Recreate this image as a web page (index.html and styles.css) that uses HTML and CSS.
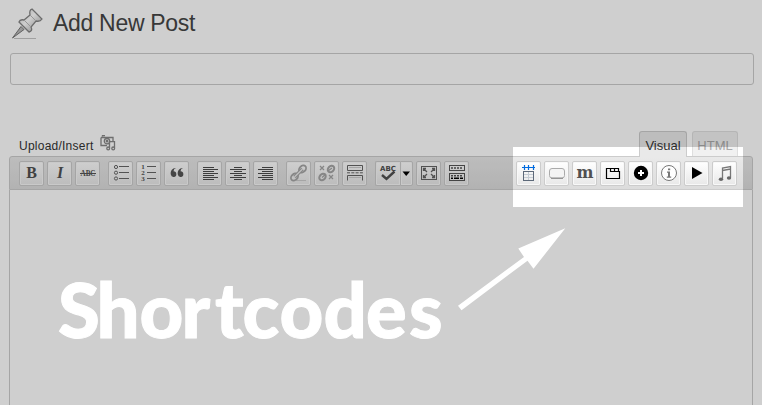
FILE: index.html
```html
<!DOCTYPE html>
<html lang="en">
<head>
<meta charset="utf-8">
<title>Add New Post</title>
<link rel="stylesheet" href="styles.css">
</head>
<body>
<header class="heading">
  <svg class="pin" width="32" height="32" viewBox="0 0 32 32">
    <defs><linearGradient id="metal" x1="0" y1="0" x2="1" y2="1"><stop offset="0" stop-color="#ccc"/><stop offset=".45" stop-color="#fff"/><stop offset="1" stop-color="#999"/></linearGradient></defs>
    <path d="M3 30.500H25" stroke="#999" opacity=".55"/>
    <path d="M1.500 30L10 18.500L13 21.500Z" fill="#bbb" stroke="#777"/>
    <path d="M8 14Q9 11 13 12L19 7Q18 2 21 1L31 11Q29 14 25 13L20 19Q22 23 18 24Z" fill="url(#metal)" stroke="#858585" stroke-width="1.300"/>
    <path d="M13 12L20 19M19 7L25 13" fill="none" stroke="#bbb"/>
  </svg>
  <h1>Add New Post</h1>
</header>
<input class="title" type="text" aria-label="Title">
<section class="editor">
  <div class="tools">
    <span class="upload">Upload/Insert</span>
    <svg class="media" width="16" height="16" viewBox="0 0 16 16" fill="none" stroke="#888" stroke-width="1.300">
      <path d="M2.500 1.500V.6H5M1 2.500H13V6M1 2.500V10.500H7"/><circle cx="7" cy="6.200" r="2.700"/><circle cx="7" cy="6.200" r=".7"/><path d="M9.500 13V6.600H14.500V13"/><circle cx="8.200" cy="13.400" r="1.400"/><circle cx="13.200" cy="13.400" r="1.400"/>
    </svg>
    <nav class="tabs"><a class="tab active">Visual</a><a class="tab">HTML</a></nav>
  </div>
  <div class="toolbar">
    <div class="group">
      <button><svg viewBox="0 0 25 25"><text class="serif" x="12.500" y="17" font-size="16">B</text></svg></button>
      <button><svg viewBox="0 0 25 25"><text class="serif italic" x="13" y="17" font-size="16">I</text></svg></button>
      <button><svg viewBox="0 0 25 25"><text class="serif" x="13" y="15" font-size="8" textLength="15" lengthAdjust="spacingAndGlyphs">ABC</text><path d="M5 12.500H21" stroke="#555"/></svg></button>
    </div>
    <div class="group">
      <button><svg viewBox="0 0 25 25" fill="none" stroke="#666"><circle cx="8" cy="6" r="1.600"/><circle cx="8" cy="11.700" r="1.600"/><circle cx="8" cy="17.500" r="1.600"/><path d="M11 5.500H21M11 11.500H21M11 17.500H21"/></svg></button>
      <button><svg viewBox="0 0 25 25"><text class="digits"><tspan x="7" y="8">1</tspan><tspan x="7" y="14">2</tspan><tspan x="7" y="20">3</tspan></text><path d="M11 5.500H20M11 11.500H20M11 17.500H20" stroke="#666"/></svg></button>
      <button><svg viewBox="0 0 25 25" fill="#555"><path d="M12 7Q9.500 7.700 9.500 10.300A2.800 2.800 0 1 1 6.800 13.600C6.300 10 8 7 12 7ZM19 7Q16.500 7.700 16.500 10.300A2.800 2.800 0 1 1 13.800 13.600C13.300 10 15 7 19 7Z"/></svg></button>
    </div>
    <div class="group">
      <button><svg viewBox="0 0 25 25" stroke="#4c4c4c"><path d="M6 6.500h11M6 8.500h15M6 10.500h11M6 12.500h15M6 14.500h11M6 16.500h15M6 18.500h11"/></svg></button>
      <button><svg viewBox="0 0 25 25" stroke="#4c4c4c"><path d="M9 6.500h8M5 8.500h16M9 10.500h8M5 12.500h16M9 14.500h8M5 16.500h16M9 18.500h8"/></svg></button>
      <button><svg viewBox="0 0 25 25" stroke="#4c4c4c"><path d="M9 6.500h11M5 8.500h15M9 10.500h11M5 12.500h15M9 14.500h11M5 16.500h15M9 18.500h11"/></svg></button>
    </div>
    <div class="group">
      <button><svg viewBox="0 0 25 25" fill="none"><path d="M10 19.500H20" stroke="#ccc"/><g stroke="#a5a5a5" stroke-width="1.800"><ellipse cx="16.500" cy="8" rx="4" ry="3" transform="rotate(-45 16.500 8)"/><ellipse cx="8.500" cy="16" rx="4" ry="3" transform="rotate(-45 8.500 16)"/></g><path d="M8.500 16L16.500 8" stroke="#a5a5a5" stroke-width="3.500"/><path d="M8.500 16L16.500 8" stroke="#eee" stroke-width="1.300"/></svg></button>
      <button><svg viewBox="0 0 25 25" fill="none" stroke="#a5a5a5"><g stroke-width="2"><ellipse cx="17" cy="8" rx="3.600" ry="2.800" transform="rotate(-45 17 8)"/><ellipse cx="8.500" cy="16" rx="3.600" ry="2.800" transform="rotate(-45 8.500 16)"/></g><path d="M14 10L18 7M8 16.500L12 13M6 5l4 4M10 5l-4 4M15 14l4 4M19 14l-4 4" stroke-width="1.300"/></svg></button>
      <button><svg viewBox="0 0 25 25" fill="none" stroke="#666"><path d="M5.500 9.500V4.500H20.500V9.500ZM5.500 19.500V14.500H20.500V19.500"/><path d="M5 11.800H21" stroke-dasharray="3 1.300"/><path d="M7 6.500H19M7 16.500H19" stroke="#ccc"/></svg></button>
    </div>
    <div class="group last">
      <button class="spell"><svg viewBox="0 0 25 25"><text class="spelling" x="13" y="9.700">ABC</text><path d="M7 14L11.500 18L19.500 10.500" fill="none" stroke="#505050" stroke-width="2.400"/></svg></button>
      <button class="arrow"><svg viewBox="0 0 13 25"><path d="M2.500 10.500H10L6.200 15Z" fill="#000"/></svg></button>
      <button><svg viewBox="0 0 25 25" fill="none" stroke="#666"><rect x="5.500" y="5.500" width="15" height="13"/><path d="M7.500 10V7.500H10M7.500 7.500L11 11M16 7.500H18.500V10M18.500 7.500L15 11M7.500 14V16.500H10M7.500 16.500L11 13M18.500 14V16.500H16M18.500 16.500L15 13" stroke-width="1.300"/></svg></button>
      <button><svg viewBox="0 0 25 25" fill="none" stroke="#555"><rect x="5.500" y="4.500" width="15" height="5"/><rect x="5.500" y="12.500" width="15" height="7"/><path d="M7 7H19M7 14.800H19" stroke-width="1.600" stroke-dasharray="2 1"/><path d="M7 17.300H9M10 17.300H15M16 17.300H19" stroke="#000" stroke-width="1.400"/></svg></button>
    </div>
    <div class="group shortcodes">
      <button><svg viewBox="0 0 25 25" fill="none"><path d="M6 6.500H19M8.500 4V9M12.500 4V9M17.500 4V9" stroke="#006be0" stroke-width="1.200"/><path d="M8 13.500H17M8 16.500H17M12.500 11V19" stroke="#c5ccd4"/><rect x="7.500" y="10.500" width="10" height="9" stroke="#5d6979"/></svg></button>
      <button><svg viewBox="0 0 25 25"><rect x="5.500" y="7.500" width="15" height="9.500" rx="2.500" fill="#f4f4f4" stroke="#aaa"/><path d="M7 17.300H19" stroke="#888"/></svg></button>
      <button><svg viewBox="0 0 25 25"><text class="message" x="13" y="17" textLength="17" lengthAdjust="spacingAndGlyphs">m</text></svg></button>
      <button><svg viewBox="0 0 25 25" fill="none" stroke="#000"><path d="M6.500 7.500H10.500V10.500H19.500V17.500H6.500ZM10.500 7.500H18.500V10.500M14.500 7.500V10.500" stroke-width="1.200"/></svg></button>
      <button><svg viewBox="0 0 25 25"><circle cx="13" cy="12" r="7.200"/><path d="M10 12H16M13 9V15" stroke="#fff" stroke-width="2"/></svg></button>
      <button><svg viewBox="0 0 25 25"><circle cx="13" cy="12" r="7.500" fill="#fff" stroke="#777"/><path d="M12 7.500h2.200v1.800H12ZM11 10.500h3v5h1.200v1.200H10.800v-1.200H12v-3.800h-1Z" fill="#777"/></svg></button>
      <button><svg viewBox="0 0 25 25"><path d="M8 6V18L18.500 12Z"/></svg></button>
      <button><svg viewBox="0 0 25 25"><path d="M10.500 17.500V7L18.500 5.500V16.500M10.500 9.500L18.500 8" fill="none" stroke="#777" stroke-width="1.300"/><ellipse cx="9" cy="18.200" rx="2.200" ry="1.700" fill="#666"/><ellipse cx="17" cy="17" rx="2.200" ry="1.700" fill="#666"/></svg></button>
    </div>
  </div>
  <div class="content"></div>
</section>
<div class="spotlight"></div>
<svg class="callout" width="762" height="405" viewBox="0 0 762 405" fill="#fff">
  <text y="338" x="58 96.500 139.500 181.500 215 242.500 279.500 323.500 366 409">Shortcodes</text>
  <path d="M458 305.800L524 257L518.300 248.500L565.300 228.200L533.500 268.800L527.500 260.700L461.500 310.300Z"/>
</svg>
</body>
</html>
```
FILE: styles.css
```css
* { box-sizing: border-box; }
body {
  margin: 0;
  height: 405px;
  overflow: hidden;
  position: relative;
  background: #fff;
  font-family: "Liberation Sans", Arial, sans-serif;
  color: #333;
}
.heading { display: flex; height: 53px; padding: 8px 0 0 11px; }
h1 { margin: 2px 0 0 10px; font-size: 23px; line-height: 26px; font-weight: 400; letter-spacing: -.3px; color: #464646; }
.title {
  display: block;
  width: 744px;
  height: 32px;
  margin-left: 10px;
  border: 1px solid #ccc;
  border-radius: 3px;
  background: #fff;
}
.editor { width: 744px; margin: 46px 0 0 9px; }
.tools { display: flex; height: 25px; padding: 0 15px 0 10px; }
.upload { margin-top: 7px; font-size: 12px; line-height: 16px; letter-spacing: .24px; }
.media { margin: 4px 0 0 6px; }
.tabs { display: flex; gap: 5px; margin-left: auto; }
.tab {
  width: 46px;
  height: 25px;
  border: 1px solid #dfdfdf;
  border-bottom: 0;
  border-radius: 3px 3px 0 0;
  background: #f1f1f1;
  color: #aaa;
  font-size: 13px;
  line-height: 28px;
  text-align: center;
}
.tab.active {
  width: 48px;
  height: 26px;
  border-color: #ccc;
  background: #e9e9e9;
  color: #333;
  position: relative;
}
.toolbar {
  display: flex;
  gap: 8px;
  height: 34px;
  padding: 4px 15px 0 9px;
  border: 1px solid #ccc;
  border-radius: 3px 3px 0 0;
  background: linear-gradient(#e9e9e9, #dcdcdc);
}
.group { display: flex; gap: 3px; }
.shortcodes { margin-left: auto; }
button {
  width: 25px;
  height: 25px;
  padding: 0;
  border: 1px solid #ccc;
  border-radius: 2px;
  background: linear-gradient(#fff, #e8e8e8);
  box-shadow: inset 0 0 0 1px #f8f8f8;
}
.spell { border-right: 0; border-radius: 2px 0 0 2px; }
.arrow { width: 13px; margin-left: -3px; border-radius: 0 2px 2px 0; }
button svg { display: block; width: 25px; height: 25px; margin: -1px; }
.arrow svg { width: 13px; }
button text { text-anchor: middle; fill: #505050; font-weight: 700; }
.serif, .digits { font-family: "Liberation Serif", serif; }
.italic { font-style: italic; }
.digits { font-size: 7px; }
.spelling { font-family: "DejaVu Sans", sans-serif; font-size: 7px; }
.message { font-family: "DejaVu Serif", serif; font-size: 17px; }
.content { height: 230px; border: solid #ccc; border-width: 0 1px; }
.spotlight {
  position: absolute;
  left: 513px;
  top: 147px;
  width: 230px;
  height: 60px;
  box-shadow: 0 0 0 800px rgba(0, 0, 0, .19);
}
.callout { position: absolute; left: 0; top: 0; }
.callout text {
  font-family: Lato, sans-serif;
  font-size: 76px;
  font-weight: 900;
  stroke: #fff;
  stroke-width: 1px;
}
```
